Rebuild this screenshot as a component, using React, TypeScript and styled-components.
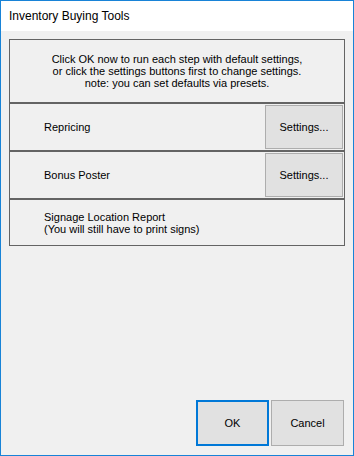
import React from "react";
import styled, { createGlobalStyle } from "styled-components";

const Global = createGlobalStyle`
  html, body { margin: 0; padding: 0; background: #f0f0f0; }
  * { box-sizing: border-box; }
`;

const Window = styled.div`
  width: 354px;
  height: 456px;
  border: 1px solid #1883d7;
  background: #f0f0f0;
  display: flex;
  flex-direction: column;
  font-family: "Liberation Sans", Arial, sans-serif;
  font-size: 11px;
  color: #000;
`;

const TitleBar = styled.div`
  height: 30px;
  background: #fff;
  display: flex;
  align-items: center;
  padding-left: 8px;
  padding-bottom: 1px;
  font-size: 12px;
  color: #000;
  flex-shrink: 0;
`;

const Body = styled.div`
  flex: 1;
  display: flex;
  flex-direction: column;
  padding: 8px 8px 9px 8px;
`;

const Stack = styled.div`
  display: flex;
  flex-direction: column;
`;

const Panel = styled.div<{ $h: number; $center?: boolean }>`
  height: ${(p) => p.$h}px;
  border: 1px solid #646464;
  display: flex;
  align-items: center;
  justify-content: ${(p) => (p.$center ? "center" : "space-between")};
  padding: ${(p) => (p.$center ? "0" : "0 1px 0 34px")};
  text-align: ${(p) => (p.$center ? "center" : "left")};
  line-height: 12px;
`;

const Label = styled.div`
  line-height: 12px;
`;

const SettingsButton = styled.button`
  width: 78px;
  height: 44px;
  background: #e1e1e1;
  border: 1px solid #adadad;
  font-family: inherit;
  font-size: 11px;
  color: #000;
  padding: 0;
`;

const Footer = styled.div`
  margin-top: auto;
  display: flex;
  justify-content: flex-end;
  gap: 2px;
  padding-right: 1px;
`;

const DialogButton = styled.button<{ $default?: boolean }>`
  width: 73px;
  height: 46px;
  background: #e1e1e1;
  border: ${(p) => (p.$default ? "2px solid #0078d7" : "1px solid #adadad")};
  font-family: inherit;
  font-size: 11px;
  color: #000;
  padding: 0;
`;

export default function App() {
  return (
    <>
      <Global />
      <Window>
        <TitleBar>Inventory Buying Tools</TitleBar>
        <Body>
          <Stack>
            <Panel $h={64} $center>
              <Label>
                Click OK now to run each step with default settings,
                <br />
                or click the settings buttons first to change settings.
                <br />
                note: you can set defaults via presets.
              </Label>
            </Panel>
            <Panel $h={48}>
              <Label>Repricing</Label>
              <SettingsButton>Settings...</SettingsButton>
            </Panel>
            <Panel $h={48}>
              <Label>Bonus Poster</Label>
              <SettingsButton>Settings...</SettingsButton>
            </Panel>
            <Panel $h={47}>
              <Label>
                Signage Location Report
                <br />
                (You will still have to print signs)
              </Label>
            </Panel>
          </Stack>
          <Footer>
            <DialogButton $default>OK</DialogButton>
            <DialogButton>Cancel</DialogButton>
          </Footer>
        </Body>
      </Window>
    </>
  );
}
